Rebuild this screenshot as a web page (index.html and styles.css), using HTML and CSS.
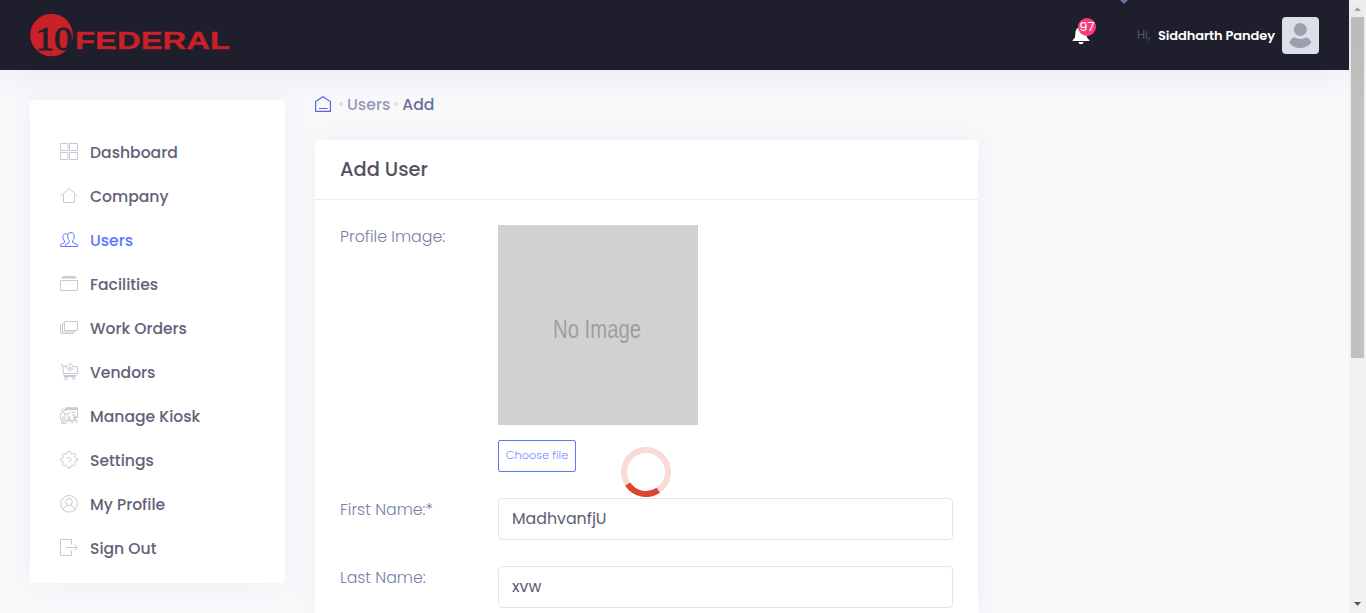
FILE: index.html
```
<!DOCTYPE html>
<html lang="en">
<head>
<meta charset="utf-8">
<title>Add User</title>
<link rel="stylesheet" href="styles.css">
</head>
<body>
<div class="page">
  <header class="header">
    <svg class="logo" width="202" height="46" viewBox="0 0 202 46">
      <circle cx="21.5" cy="23" r="21.3" fill="#c82127"/>
      <text x="5.500" y="37.5" class="logo-num" textLength="37" lengthAdjust="spacingAndGlyphs">10</text>
      <text x="45" y="36.8" class="logo-text" textLength="155" lengthAdjust="spacingAndGlyphs">FEDERAL</text>
    </svg>
    <div class="topbar">
      <div class="bell">
        <svg width="18" height="20" viewBox="0 0 18 20" fill="#fff"><path d="M9 1C5.500 1 3.600 3.600 3.400 7L3 11.500L.6 14.200V15H17.400V14.200L15 11.500L14.600 7C14.400 3.600 12.500 1 9 1ZM6.300 16H11.700Q11.200 18.300 9 18.300T6.300 16Z"/></svg>
        <span class="badge">97</span>
      </div>
      <span class="hi">Hi,</span>
      <span class="name">Siddharth Pandey</span>
      <svg class="avatar" width="37" height="37" viewBox="0 0 37 37"><rect width="37" height="37" rx="4" fill="#dbdfe8"/><circle cx="18.300" cy="12.500" r="6.500" fill="#9d9faf"/><path d="M7.300 25.500C9 21.500 11 20.200 12.500 20.200C16 22.300 20.500 22.300 24 20.200C26 20.400 28.300 22.500 29.300 25.500C27 29 23 31 18.300 31S9.500 29 7.300 25.500Z" fill="#9d9faf"/></svg>
    </div>
    <svg class="notch" width="10" height="4" viewBox="0 0 10 4"><path d="M1 0H9L5 4Z" fill="#6a70a8"/></svg>
  </header>

  <div class="content">
    <nav class="sidebar">
      <a class="item"><svg class="ico" viewBox="0 0 18 18"><path d="M.5.5H8V7.500H.5ZM9.500.5H17.500V7.500H9.500ZM.5 9.500H8V16.500H.5ZM9.500 9.500H17.500V16.500H9.500Z"/></svg><span>Dashboard</span></a>
      <a class="item"><svg class="ico" viewBox="0 0 18 18"><path d="M.5 9.200L9 1.200L17.500 9.200M3.500 7.500V15.500H14.500V7.500"/></svg><span>Company</span></a>
      <a class="item active"><svg class="ico" viewBox="0 0 18 18"><path d="M.5 15.500H17.500M.5 15.500V13.800L4.500 11.500V10C2.200 7.500 2.500 3 5.300 2.800Q7 2.600 7.800 3.800M5.500 15.300V13.500L9.300 11.500V9.700C6.800 7 7.300 1.500 11 1.500S15.200 7 12.700 9.700V11.500L17.500 13.700V15.500"/></svg><span>Users</span></a>
      <a class="item"><svg class="ico" viewBox="0 0 18 18"><path d="M.5 5.500H17.500V15.500H.5Z"/><path class="solid" d="M3 1H15L17 3.500H1Z"/></svg><span>Facilities</span></a>
      <a class="item"><svg class="ico" viewBox="0 0 18 18"><path d="M4.500 2.500H17.500V11.500H4.500ZM4.500 4.500H2.500V13H15V11.500M2.500 6.500H.5V14.500H13V13"/></svg><span>Work Orders</span></a>
      <a class="item"><svg class="ico" viewBox="0 0 18 18"><path d="M.3 1.500H2.300L4 12.500H17M3 3.500H6.500M13.500 3.500H17.500V10.500H3.800M4 12.500V13.500H15.500M10 .8A3.400 3.400 0 1 1 9.900.8M10 2.500V6M8 4.700L10 6L12 4.700"/><circle cx="6" cy="15.200" r="1.300"/><circle cx="13.500" cy="15.200" r="1.300"/></svg><span>Vendors</span></a>
      <a class="item"><svg class="ico" viewBox="0 0 18 18"><path class="solid" d="M5.500.5H17.500V3H5.500Z"/><path d="M5.500 4V1H17.500V10.500H13M8 7.500L11 4.500M12 5.500H15.500M12 8H15.500M.5 7L3 5L5 7H9M.5 6.500V12.500H2V16.500H5V6.500M3 9V16M7 16.500V13.500L9 11.500L11 13.500V16.500M13 16.500V13.500L15 11.500L17 13.500V16.500M6 13.500H17"/><circle cx="3" cy="3.500" r="1.400"/><circle cx="9" cy="10.500" r="1.300"/><circle cx="15" cy="10.500" r="1.300"/></svg><span>Manage Kiosk</span></a>
      <a class="item"><svg class="ico" viewBox="0 0 18 18"><path d="M7.500.5H10.500L11 2.700L12.500 3.300L14.500 2L16 3.700L14.500 5.700L15.200 7L17.400 7.500V9.700L15.200 10.200L14.500 11.700L15.800 13.500L14 15.200L12.300 14L11 14.700L10.500 16.800H7.500L7 14.700L5.500 14L3.800 15.200L2.200 13.500L3.500 11.700L2.800 10.200L.6 9.700V7.500L2.800 7L3.500 5.700L2.200 3.700L4 2L5.700 3.300L7 2.700ZM7 8A2.100 2.100 0 1 1 9 10.700"/></svg><span>Settings</span></a>
      <a class="item"><svg class="ico" viewBox="0 0 18 18"><circle cx="9" cy="8.800" r="8.300"/><ellipse cx="9" cy="7" rx="3.300" ry="3.600"/><path d="M3.300 14.800C3.700 12 5.500 11.300 7.300 10.300M14.700 14.800C14.300 12 12.500 11.300 10.700 10.300"/></svg><span>My Profile</span></a>
      <a class="item"><svg class="ico" viewBox="0 0 18 18"><path d="M11.500 5.500V.5H.5V16.500H11.500V11.500M6 8.500H17.300M14.300 5.500L17.300 8.500L14.300 11.500"/></svg><span>Sign Out</span></a>
    </nav>

    <main class="main">
      <div class="crumbs">
        <svg width="16" height="16" viewBox="0 0 16 16" fill="none" stroke="#5d66dc" stroke-width="1.200"><path d="M.6 5.500L8 .8L15.400 5.500V15.400H.6ZM4 12.500H12.500"/></svg>
        <i class="dot"></i><span class="crumb">Users</span><i class="dot"></i><span class="crumb current">Add</span>
      </div>
      <section class="card">
        <h1 class="card-head">Add User</h1>
        <div class="form">
          <div class="row">
            <label class="label">Profile Image:</label>
            <div class="upload">
              <svg class="placeholder" width="200" height="200" viewBox="0 0 200 200"><rect width="200" height="200" fill="#d1d1d1"/><text x="55" y="113" textLength="88" lengthAdjust="spacingAndGlyphs">No Image</text></svg>
              <button class="choose">Choose file</button>
            </div>
          </div>
          <div class="row">
            <label class="label">First Name:*</label>
            <div class="input">MadhvanfjU</div>
          </div>
          <div class="row">
            <label class="label">Last Name:</label>
            <div class="input">xvw</div>
          </div>
        </div>
      </section>
    </main>
  </div>
</div>

<div class="scrollbar">
  <svg width="17" height="17" viewBox="0 0 17 17"><path d="M5 11L8.500 7.200L12 11Z" fill="#a3a3a3"/></svg>
  <div class="thumb"></div>
  <svg width="17" height="17" viewBox="0 0 17 17"><path d="M5 6L8.500 9.800L12 6Z" fill="#505050"/></svg>
</div>

<svg class="spinner" width="50" height="50" viewBox="0 0 50 50" fill="none" stroke-width="6"><circle cx="25" cy="25" r="22" stroke="#f8dad6"/><path d="M6.700 37.200A22 22 0 0 0 37.300 43.300" stroke="#dc4630"/></svg>
</body>
</html>
```
FILE: styles.css
```
* { box-sizing: border-box; }
body {
  margin: 0;
  height: 613px;
  display: flex;
  overflow: hidden;
  background: #f9f9fc;
  font-family: Poppins, Inter, sans-serif;
  font-size: 16px;
}
.page { flex: 1; min-width: 0; }

.header {
  position: relative;
  height: 70px;
  padding: 0 30px;
  display: flex;
  align-items: center;
  justify-content: space-between;
  background: #1e1e2d;
  box-shadow: 0 0 40px rgba(82, 63, 105, .1);
}
.logo-num { font: 33px "Liberation Serif", serif; fill: #1e1e2d; stroke: #1e1e2d; stroke-width: .8px; }
.logo-text { font: bold 23.500px "Liberation Sans", sans-serif; fill: #c82127; stroke: #c82127; stroke-width: .3px; }
.topbar { display: flex; align-items: center; }
.bell { position: relative; height: 20px; margin: 2px 47px 0 0; }
.bell svg { display: block; }
.badge {
  position: absolute;
  left: 6px;
  top: -8px;
  width: 18px;
  height: 18px;
  border-radius: 50%;
  background: #fd397a;
  color: #fff;
  font-size: 13px;
  line-height: 18px;
  text-align: center;
}
.hi { width: 21px; padding-top: 1px; color: #565674; font-size: 11.700px; }
.name { width: 124px; padding-top: 1px; color: #fff; font-size: 13px; font-weight: 600; letter-spacing: -.1px; white-space: nowrap; }
.avatar { display: block; }
.notch { position: absolute; left: 1119px; top: 0; }

.content { display: flex; gap: 30px; padding: 30px 30px 0; }
.sidebar {
  width: 255px;
  height: 483px;
  padding: 30px 30px 0;
  background: #fff;
  border-radius: 4px;
  box-shadow: 0 0 30px rgba(82, 63, 105, .06);
}
.item { display: flex; align-items: center; gap: 12px; height: 44px; color: #646179; font-size: 15.600px; font-weight: 500; }
.ico { width: 18px; height: 18px; fill: none; stroke: #c9c9d4; stroke-width: 1; }
.ico .solid { fill: #c9c9d4; stroke: none; }
.active { color: #5d78ff; }
.active .ico { stroke: #5d78ff; }

.main { width: 663px; }
.crumbs { display: flex; align-items: center; height: 16px; margin: -4px 0 28px; }
.dot { width: 4px; height: 4px; margin: 0 4px 0 8px; border-radius: 50%; background: #dfdfe9; }
.dot ~ .dot { margin-left: 4px; }
.crumb { color: #959cb6; font-size: 15.700px; font-weight: 500; }
.current { color: #6a6f9a; }

.card { height: 473px; background: #fff; border-radius: 4px 4px 0 0; box-shadow: 0 0 30px rgba(82, 63, 105, .06); }
.card-head {
  margin: 0;
  height: 60px;
  padding: 0 25px;
  border-bottom: 1px solid #ebedf2;
  color: #54525f;
  font-size: 19.400px;
  font-weight: 500;
  line-height: 59px;
}
.form { height: 413px; padding: 25px 25px 0; display: grid; gap: 26px; align-content: start; }
.row { display: grid; grid-template-columns: 158px 1fr; align-items: start; }
.label { color: #7780a8; font-size: 15.800px; font-weight: 300; line-height: 23px; }
.upload { display: flex; flex-direction: column; align-items: flex-start; gap: 15px; }
.placeholder text { font: 25px "Liberation Sans Narrow", "Liberation Sans", sans-serif; fill: #9f9f9f; }
.choose {
  width: 78px;
  height: 32px;
  padding: 0 0 1px;
  border: 1px solid #5d78ff;
  border-radius: 2px;
  background: #fff;
  color: #7b8aff;
  font: 300 11.400px Poppins, Inter, sans-serif;
}
.input { height: 42px; padding: 0 13px; border: 1px solid #e2e5ec; border-radius: 4px; color: #595d6e; font-size: 15.800px; line-height: 40px; }

.scrollbar { width: 17px; height: 613px; display: flex; flex-direction: column; align-items: center; background: #f1f1f1; }
.thumb { width: 13px; height: 341px; margin-bottom: auto; background: #c1c1c1; }
.scrollbar svg { flex: none; }
.spinner { position: absolute; left: 621px; top: 447px; }
```
